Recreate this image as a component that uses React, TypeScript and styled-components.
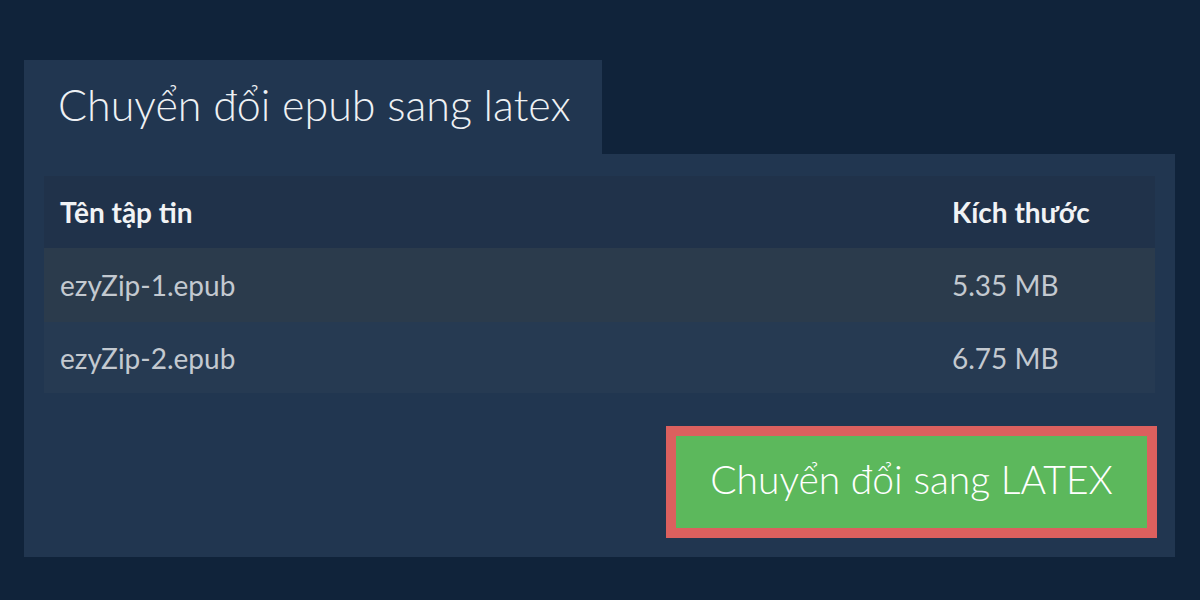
import styled, { createGlobalStyle } from "styled-components"

const GlobalStyle = createGlobalStyle`
  html, body {
    margin: 0;
    padding: 0;
    background: #10233a;
    font-family: Lato, "Noto Sans", sans-serif;
  }
`

const Page = styled.div`
  width: 1200px;
  height: 600px;
  box-sizing: border-box;
  padding: 60px 25px 0 24px;
  display: flex;
  flex-direction: column;
  align-items: flex-start;
`

const Tab = styled.div`
  width: 578px;
  height: 94px;
  box-sizing: border-box;
  padding-left: 34px;
  background: #213650;
  display: flex;
  align-items: center;
`

const Title = styled.h1`
  margin: 0;
  font-family: "Lato Light", Lato, "Noto Sans", sans-serif;
  font-size: 43px;
  font-weight: 300;
  color: #eef1f4;
  line-height: 1;
  padding-bottom: 6px;
`

const Panel = styled.div`
  width: 1151px;
  height: 403px;
  box-sizing: border-box;
  background: #213650;
  padding: 22px 18px 19px 20px;
  display: flex;
  flex-direction: column;
`

const Table = styled.div`
  width: 1111px;
  display: flex;
  flex-direction: column;
`

const Row = styled.div<{ $bg: string; $h: number }>`
  display: grid;
  grid-template-columns: 1fr 203px;
  align-items: center;
  height: ${p => p.$h}px;
  background: ${p => p.$bg};
  padding-left: 16px;
`

const HeadCell = styled.div`
  font-size: 28px;
  font-weight: 700;
  color: #f1f3f5;
`

const Cell = styled.div`
  font-size: 28px;
  font-weight: 400;
  color: #c3c9d0;
`

const Actions = styled.div`
  margin-top: auto;
  display: flex;
  justify-content: flex-end;
`

const ConvertButton = styled.button`
  width: 491px;
  height: 112px;
  box-sizing: border-box;
  border: 10px solid #dc605e;
  background: #5cb85c;
  color: #ffffff;
  font-family: "Lato Light", Lato, "Noto Sans", sans-serif;
  font-size: 39px;
  font-weight: 300;
  cursor: pointer;
  padding: 0 0 6px;
`

const files = [
  { name: "ezyZip-1.epub", size: "5.35 MB", bg: "#2b3b4c", h: 74 },
  { name: "ezyZip-2.epub", size: "6.75 MB", bg: "#263a52", h: 71 },
]

export default function App() {
  return (
    <>
      <GlobalStyle />
      <Page>
        <Tab>
          <Title>Chuyển đổi epub sang latex</Title>
        </Tab>
        <Panel>
          <Table>
            <Row $bg="#20324a" $h={72}>
              <HeadCell>Tên tập tin</HeadCell>
              <HeadCell>Kích thước</HeadCell>
            </Row>
            {files.map(f => (
              <Row key={f.name} $bg={f.bg} $h={f.h}>
                <Cell>{f.name}</Cell>
                <Cell>{f.size}</Cell>
              </Row>
            ))}
          </Table>
          <Actions>
            <ConvertButton>Chuyển đổi sang LATEX</ConvertButton>
          </Actions>
        </Panel>
      </Page>
    </>
  )
}
